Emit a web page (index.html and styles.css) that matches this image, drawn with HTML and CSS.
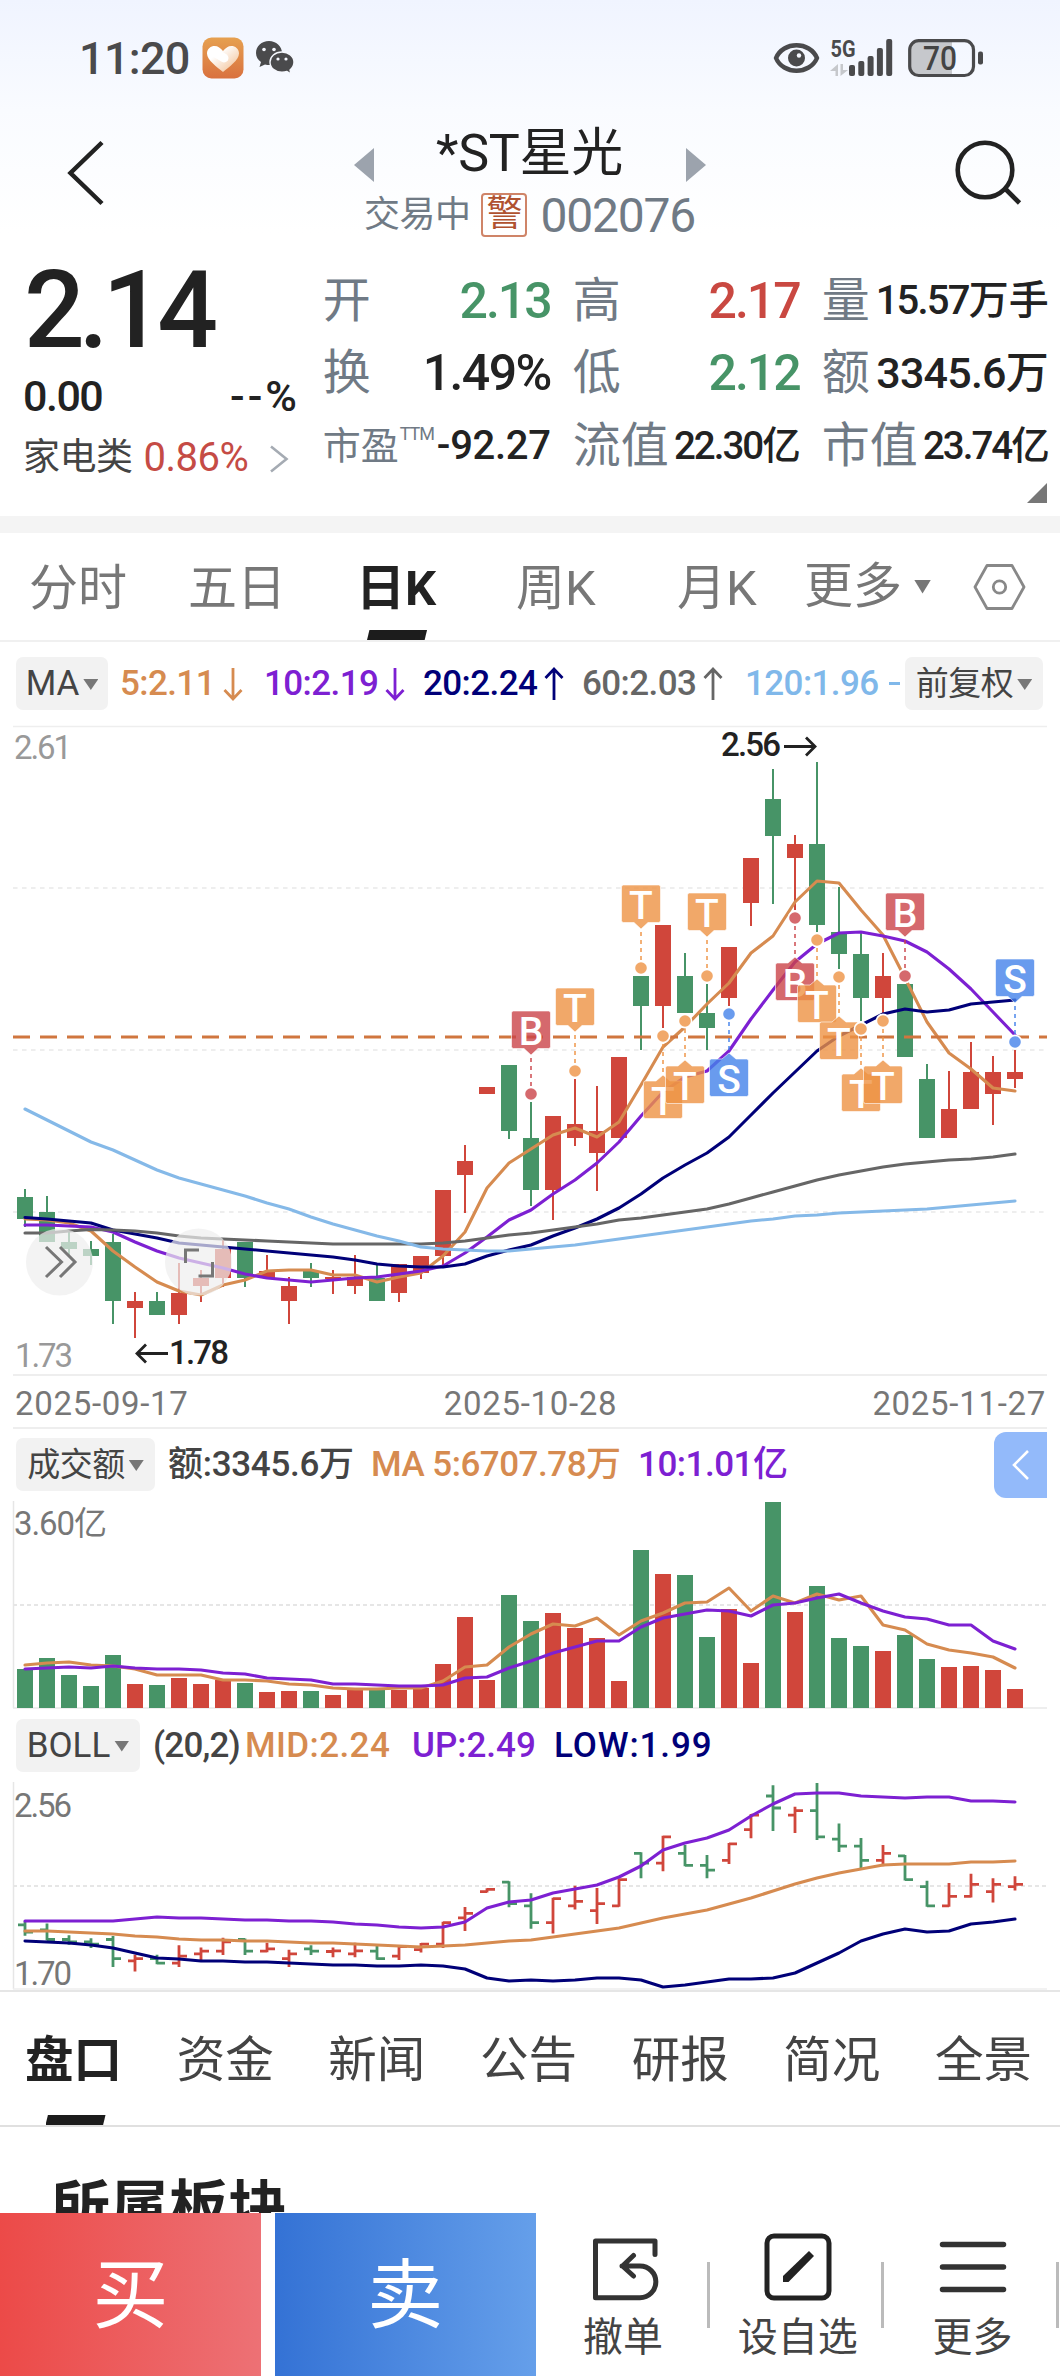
FILE: index.html
```html
<!DOCTYPE html>
<html lang="zh-CN">
<head>
<meta charset="utf-8">
<title>*ST星光 002076</title>
<link rel="stylesheet" href="styles.css">
</head>
<body>
<div class="screen">
  <header class="top">
    <div class="status">
      <span class="clock">11:20</span>
      <svg class="ico-heart" width="42" height="42" viewBox="0 0 42 42">
        <defs>
          <linearGradient id="hb" x1="0" y1="0" x2="0" y2="1"><stop offset="0" stop-color="#e6a050"/><stop offset="1" stop-color="#d9713f"/></linearGradient>
          <linearGradient id="hf" x1="0" y1="0" x2="1" y2="1"><stop offset="0.3" stop-color="#fff"/><stop offset="0.75" stop-color="#f6d3b4"/></linearGradient>
        </defs>
        <rect x="0.5" y="0.5" width="41" height="41" rx="9" fill="url(#hb)"/>
        <path d="M21 35C15 30 5 23 5 16.500C5 11.500 9 9 12.500 9C16 9 18.500 11 21 14C23.500 11 26 9 29.500 9C33 9 37 11.500 37 16.500C37 23 27 30 21 35Z" fill="url(#hf)"/>
        <path d="M12 15L22 21" stroke="#fff" stroke-width="9" stroke-linecap="round"/>
      </svg>
      <svg class="ico-chat" width="40" height="36" viewBox="0 0 40 36">
        <path d="M14 1C6.500 1 1 6 1 13C1 17 3 20 6 22L4.500 27L10 24.500C11.500 25 13 25 15 25C22 24 27 19 27 13C27 6 21 1 14 1Z" fill="#4a4a4c"/>
        <path d="M27 12C20 12 15 16.500 15 22C15 28 20 32.300 27 32.300C29 32.300 30.500 32 32 31.500L36 34L35 30C37.500 28 39 25.500 39 22C39 16.500 33.500 12 27 12Z" fill="#4a4a4c" stroke="#f6f8fe" stroke-width="1.400"/>
        <g fill="#f6f8fe"><circle cx="9" cy="9.500" r="1.800"/><circle cx="19" cy="9.500" r="1.800"/><circle cx="23" cy="19" r="1.600"/><circle cx="31" cy="19" r="1.600"/></g>
      </svg>
      <span class="spring"></span>
      <svg class="ico-eye" width="47" height="32" viewBox="0 0 47 32">
        <path d="M3 16C10 -1 37 -1 44 16C37 33 10 33 3 16Z" fill="none" stroke="#4a4a4c" stroke-width="4.500" stroke-linejoin="round"/>
        <circle cx="23.500" cy="16" r="8.500" fill="#4a4a4c"/><circle cx="26" cy="13.500" r="2.200" fill="#f6f8fe"/>
      </svg>
      <svg class="ico-signal" width="64" height="38" viewBox="0 0 64 38">
        <text x="0.500" y="18" font-size="24" font-weight="700" fill="#4a4a4c" textLength="25" lengthAdjust="spacingAndGlyphs">5G</text>
        <path d="M8 25V37H5.500V32H0L8 25ZM10.500 25V37L18 31H13V25Z" fill="#c6c8cc"/>
        <g fill="#4a4a4c"><rect x="19" y="26" width="6" height="11" rx="2"/><rect x="28.300" y="22" width="6" height="15" rx="2"/><rect x="37.600" y="17" width="6" height="20" rx="2"/><rect x="46.900" y="9" width="6" height="28" rx="2"/><rect x="56.200" y="0" width="6" height="37" rx="2"/></g>
      </svg>
      <svg class="ico-batt" width="77" height="38" viewBox="0 0 77 38">
        <path d="M11 1.500H44V36.500H11C5 36.500 2 33 2 27V11C2 5 5 1.500 11 1.500Z" fill="#c6c8cc"/>
        <rect x="1.700" y="1.700" width="63.800" height="34.800" rx="9" fill="none" stroke="#4a4a4c" stroke-width="3.200"/>
        <rect x="70" y="12.500" width="5" height="13" rx="2" fill="#4a4a4c"/>
        <text x="15" y="31" font-size="34" font-weight="500" fill="#444" textLength="34" lengthAdjust="spacingAndGlyphs">70</text>
      </svg>
    </div>
    <div class="title-bar">
      <svg width="40" height="66" viewBox="0 0 40 66"><path d="M36 2.500L4.500 33L36 63.500" fill="none" stroke="#222" stroke-width="4.500"/></svg>
      <div class="title">
        <div class="title-name">
          <svg width="20" height="34" viewBox="0 0 20 34"><path d="M20 0V34L0 17Z" fill="#9ca3ad"/></svg>
          <h1>*ST星光</h1>
          <svg width="20" height="34" viewBox="0 0 20 34"><path d="M0 0V34L20 17Z" fill="#9ca3ad"/></svg>
        </div>
        <div class="title-sub"><span class="state">交易中</span><span class="warn">警</span><span class="code">002076</span></div>
      </div>
      <svg width="70" height="66" viewBox="0 0 70 66"><circle cx="30" cy="30" r="27.300" fill="none" stroke="#222" stroke-width="4.600"/><path d="M49.500 48L64.500 63" stroke="#222" stroke-width="4.600"/></svg>
    </div>
  </header>

  <section class="quote">
    <div class="price">
      <div class="last">2.14</div>
      <div class="change"><span>0.00</span><span class="dash">--%</span></div>
      <div class="sector"><span>家电类</span><b>0.86%</b><svg width="20" height="28" viewBox="0 0 20 28"><path d="M2 1.500L17.500 14L2 26.500" fill="none" stroke="#a5abb3" stroke-width="2.600"/></svg></div>
    </div>
    <div class="stats">
      <div class="stat"><label>开</label><span class="val down">2.13</span></div>
      <div class="stat"><label>高</label><span class="val up">2.17</span></div>
      <div class="stat"><label>量</label><span class="amount small"><i>15.57</i>万手</span></div>
      <div class="stat"><label>换</label><span class="val pct">1.49%</span></div>
      <div class="stat"><label>低</label><span class="val down">2.12</span></div>
      <div class="stat"><label>额</label><span class="amount large"><i>3345.6</i>万</span></div>
      <div class="stat"><label class="pe">市盈<sup>TTM</sup></label><span class="amount neg">-92.27</span></div>
      <div class="stat"><label>流值</label><span class="amount cap"><i>22.30</i>亿</span></div>
      <div class="stat"><label>市值</label><span class="amount cap"><i>23.74</i>亿</span></div>
    </div>
    <span class="corner"></span>
  </section>

  <nav class="periods">
    <a>分时</a><a>五日</a><a class="on">日K</a><a>周K</a><a>月K</a><a class="more">更多<i class="tri"></i></a>
    <svg width="53" height="46" viewBox="0 0 53 46"><path d="M14 1.500H39L51 23L39 44.500H14L2 23Z" fill="none" stroke="#888" stroke-width="2.800" stroke-linejoin="round"/><circle cx="26.500" cy="23" r="6.200" fill="none" stroke="#888" stroke-width="2.800"/></svg>
  </nav>

  <div class="legend ma-legend">
    <button class="w92">MA<i class="tri"></i></button>
    <span class="c-ma5">5:2.11</span><svg class="arr c-ma5" viewBox="0 0 20 34"><path d="M10 1V31M1.500 23L10 32L18.500 23"/></svg>
    <span class="c-ma10">10:2.19</span><svg class="arr c-ma10" viewBox="0 0 20 34"><path d="M10 1V31M1.500 23L10 32L18.500 23"/></svg>
    <span class="c-ma20">20:2.24</span><svg class="arr c-ma20" viewBox="0 0 20 34"><path d="M10 33V3M1.500 11L10 2L18.500 11"/></svg>
    <span class="c-ma60">60:2.03</span><svg class="arr c-ma60" viewBox="0 0 20 34"><path d="M10 33V3M1.500 11L10 2L18.500 11"/></svg>
    <span class="c-ma120">120:1.96 <em></em></span>
    <button class="w138">前复权<i class="tri"></i></button>
  </div>

  <svg id="kline" class="chart" width="1060" height="656" viewBox="0 720 1060 656"></svg>
  <div class="dates"><span>2025-09-17</span><span>2025-10-28</span><span>2025-11-27</span></div>

  <div class="legend vol-legend">
    <button class="w139">成交额<i class="tri"></i></button>
    <span class="c-dark">额:3345.6万</span><span class="c-ma5">MA 5:6707.78万</span><span class="c-ma10">10:1.01亿</span>
    <div class="drawer"><svg width="18" height="30" viewBox="0 0 18 30"><path d="M16 1L2 15L16 29" fill="none" stroke="#fff" stroke-width="2.600"/></svg></div>
  </div>
  <svg id="volume" class="chart" width="1060" height="209" viewBox="0 1500 1060 209"></svg>

  <div class="legend boll-legend">
    <button class="w124">BOLL<i class="tri"></i></button>
    <span class="c-dark">(20,2)</span><span class="c-ma5">MID:2.24</span><span class="c-ma10">UP:2.49</span><span class="c-ma20">LOW:1.99</span>
  </div>
  <svg id="boll" class="chart" width="1060" height="210" viewBox="0 1780 1060 210"></svg>

  <nav class="sections"><a class="on">盘口</a><a>资金</a><a>新闻</a><a>公告</a><a>研报</a><a>简况</a><a>全景</a></nav>
  <h2 class="board">所属板块</h2>

  <footer class="actions">
    <button class="buy">买</button><button class="sell">卖</button>
    <div class="act"><svg width="70" height="70" viewBox="0 0 70 70"><path d="M67 22.500V9H7.500V65.700H52A15.500 15.500 0 0 0 52 34H34M45.500 23.500L34.500 34L45.500 44" fill="none" stroke="#333" stroke-width="5" stroke-linecap="round" stroke-linejoin="round"/></svg><span>撤单</span></div>
    <div class="act"><svg width="70" height="70" viewBox="0 0 70 70"><rect x="4" y="4" width="62" height="62" rx="7" fill="none" stroke="#222" stroke-width="5"/><path d="M20 50V44L46 19L51 24L25.500 50Z" fill="#222"/></svg><span>设自选</span></div>
    <div class="act"><svg width="70" height="70" viewBox="0 0 70 70"><path d="M4.500 12.500H65.500M4.500 35H65.500M4.500 57.500H65.500" stroke="#333" stroke-width="5.500" stroke-linecap="round"/></svg><span>更多</span></div>
  </footer>
</div>
<script src="charts.js"></script>
</body>
</html>
```
FILE: styles.css
```css
* { box-sizing: border-box; }
body { margin: 0; background: #fff; color: #222; font-family: Roboto, "Noto Sans CJK SC", sans-serif; }
button { border: 0; font-family: inherit; padding: 0; }
i, em { font-style: normal; }
.screen { width: 1060px; height: 2376px; overflow: hidden; display: flex; flex-direction: column; }
.screen > * { flex: none; }
svg { display: block; flex: none; overflow: visible; }

.top { height: 245px; background: linear-gradient(#f0f4ff, #f9fbff 45%, #fff 95%); }
.status { height: 115px; padding: 0 75px 0 79px; display: flex; align-items: center; color: #4a4a4c; }
.clock { font-size: 45px; font-weight: 500; width: 123px; letter-spacing: -0.7px; padding-top: 2px; }
.ico-heart { margin-right: 11px; }
.spring { flex: 1; }
.ico-eye { margin-right: 10px; }
.ico-signal { margin-right: 14px; }
.title-bar { height: 130px; padding: 0 35px 0 66px; display: flex; justify-content: space-between; }
.title-bar > svg { margin-top: 25px; }
.title { width: 352px; margin-left: -2px; display: flex; flex-direction: column; align-items: center; }
.title-name { display: flex; justify-content: space-between; width: 352px; }
.title-name svg { margin-top: 33px; }
h1 { margin: 7px 0 0; font-size: 52px; line-height: 64px; font-weight: 400; letter-spacing: -0.3px; }
.title-sub { height: 50px; margin-top: 4px; display: flex; align-items: center; color: #707a85; }
.state { font-size: 36px; letter-spacing: -0.5px; line-height: 50px; }
.warn { width: 46px; height: 44px; margin: 0 13px 0 11px; border: 2px solid #cf8468; border-radius: 4px; color: #b0522f; font-size: 36px; line-height: 38px; text-align: center; }
.code { font-size: 48px; letter-spacing: -1.2px; line-height: 50px; padding-top: 2px; }

.quote { height: 271px; padding: 20px 10px 0 23px; display: flex; position: relative; }
.price { width: 300px; }
.last { font-size: 107px; font-weight: 500; line-height: 92px; letter-spacing: -6px; margin-left: 1px; }
.change { height: 62px; margin-top: 8px; width: 274px; display: flex; justify-content: space-between; align-items: center; font-size: 43px; font-weight: 500; letter-spacing: -1.5px; }
.change .dash { letter-spacing: 3px; margin-right: -3px; }
.sector { height: 62px; display: flex; align-items: center; font-size: 37px; color: #444; letter-spacing: -0.5px; line-height: 50px; }
.sector b { margin-left: 11px; font-weight: 400; font-size: 40px; color: #c54b45; }
.sector svg { margin-left: 21px; margin-top: 2px; }
.stats { width: 728px; display: grid; grid-template-columns: 228px 227px 227px; column-gap: 22px; grid-template-rows: 72px 72px 74px; }
.stat { display: flex; justify-content: space-between; align-items: center; line-height: 60px; white-space: nowrap; }
.stat label { font-size: 48px; color: #707a85; margin-right: -10px; }
.val { font-size: 50px; font-weight: 500; letter-spacing: -2px; }
.val.pct { letter-spacing: -1.6px; }
.down { color: #479467; }
.up { color: #c94841; }
.amount { font-weight: 500; }
.amount.small { font-size: 40px; }
.small i { letter-spacing: -1.8px; }
.amount.large { font-size: 43px; }
.large i { letter-spacing: -0.8px; }
.amount.neg { font-size: 40px; letter-spacing: -0.3px; }
.amount.cap { font-size: 38.500px; margin-right: -1px; }
.cap i { letter-spacing: -2px; }
.stat .pe { font-size: 38px; display: flex; }
.pe sup { font-size: 18px; line-height: 36px; letter-spacing: -1px; margin-left: 1px; }
.corner { position: absolute; right: 13px; bottom: 13px; width: 20px; height: 20px; background: #777; clip-path: polygon(100% 0, 100% 100%, 0 100%); }

.periods { height: 126px; border-top: 17px solid #f4f4f4; border-bottom: 2px solid #f0f0f0; padding: 0 33px 0 29px; display: flex; align-items: center; font-size: 49px; color: #777; line-height: 111px; }
.periods a { height: 107px; margin-right: 61px; position: relative; white-space: nowrap; }
.periods a:nth-child(2) { margin-right: 70px; }
.periods .on { color: #222; font-weight: 700; width: 80px; margin-right: 80px; }
.periods a:nth-child(4) { width: 81px; margin-right: 80px; }
.periods a:nth-child(5) { width: 81px; margin-right: 46px; }
.periods .more { display: flex; align-items: center; margin-right: 42px; }
.on::after { content: ""; position: absolute; left: 50%; margin-left: -29px; bottom: 0; width: 60px; height: 10px; background: #1c1c1c; clip-path: polygon(4% 0, 100% 0, 96% 100%, 0 100%); }
.tri { display: inline-block; flex: none; width: 15px; height: 11px; background: #777; clip-path: polygon(0 0, 100% 0, 50% 100%); }
.more .tri { width: 17px; height: 14px; margin-left: 12px; }

.legend { display: flex; align-items: center; padding-left: 16px; font-size: 35px; font-weight: 500; line-height: 55px; white-space: nowrap; }
.legend button { height: 53px; border-radius: 7px; background: #f2f2f2; color: #444; font-size: 35px; display: flex; align-items: center; justify-content: center; gap: 4px; line-height: 55px; font-weight: 400; }
.legend button .tri { margin-top: 2px; }
.w92 { width: 92px; } .w138 { width: 138px; } .w139 { width: 139px; } .w124 { width: 124px; }
.legend .w138, .legend .w139 { font-size: 33px; letter-spacing: -0.5px; line-height: 53px; }
.c-ma5 { color: #d68b50; } .c-ma10 { color: #7d20d2; } .c-ma20 { color: #000078; } .c-ma60 { color: #666; } .c-ma120 { color: #80b8ea; } .c-dark { color: #444; }
.ma-legend { height: 78px; padding-top: 5px; letter-spacing: -0.6px; }
.ma-legend .c-ma5:nth-child(2) { margin-left: 12px; width: 92px; }
.ma-legend span { width: 113px; }
.arr { width: 20px; height: 34px; margin: 0 18px 0 8px; fill: none; stroke: currentColor; stroke-width: 2.800; }
.ma-legend .arr.c-ma5 { margin-left: 11px; margin-right: 21px; }
.ma-legend .arr.c-ma60 { margin-right: 22px; }
.ma-legend .c-ma120 { width: 160px; display: flex; align-items: center; }
.c-ma120 em { width: 11px; height: 3px; background: #80b8ea; margin-left: 10px; }
.dates { height: 53px; margin: 0 13px; padding: 0 1px 0 2px; border-bottom: 2px solid #eee; display: flex; justify-content: space-between; font-size: 33px; letter-spacing: 0.700px; color: #777; line-height: 55px; }
.vol-legend { height: 71px; padding-right: 13px; }
.vol-legend span { letter-spacing: -0.5px; }
.vol-legend .c-dark { margin-left: 13px; width: 203px; letter-spacing: -0.300px; }
.vol-legend .c-ma5 { width: 267px; }
.drawer { margin-left: auto; width: 53px; height: 66px; border-radius: 12px 0 0 12px; background: #93bafa; padding: 18px 0 0 18px; }
.boll-legend { height: 71px; padding-top: 1px; }
.boll-legend .c-dark { margin-left: 13px; width: 92px; letter-spacing: -0.8px; }
.boll-legend .c-ma5 { width: 167px; letter-spacing: 0.4px; }
.boll-legend .c-ma10 { width: 142px; }
.boll-legend .c-ma20 { letter-spacing: 0.9px; }
.chart text { font-family: Roboto, "Noto Sans CJK SC", sans-serif; }

.sections { height: 137px; border-top: 2px solid #e6e6e6; border-bottom: 2px solid #e0e0e0; padding: 0 28px 0 25px; display: flex; justify-content: space-between; font-size: 48.500px; color: #444; line-height: 137px; }
.sections a { position: relative; height: 133px; }
.sections .on { color: #222; font-weight: 700; }
.sections .on::after { margin-left: -28px; }
.board { margin: 0; height: 86px; padding: 52px 0 0 51px; font-size: 59px; line-height: 60px; font-weight: 700; overflow: hidden; }
.actions { height: 163px; display: flex; background: #fff; position: relative; }
.actions button { width: 261px; color: #fff; font-size: 76px; line-height: 167px; }
.buy { background: linear-gradient(90deg, #ec4a48, #ed7175); margin-right: 14px; }
.sell { background: linear-gradient(90deg, #3472d5, #659fea); }
.act { width: 175px; padding-top: 19px; display: flex; flex-direction: column; align-items: center; font-size: 40px; line-height: 50px; color: #444; background: linear-gradient(#bbb, #bbb) 171px 49px / 3px 66px no-repeat; }
.act span { margin-top: 11px; }
```
FILE: charts.js
```js
const RED = '#d0463b', GREEN = '#479467', ORANGE = '#d68b50', PURPLE = '#7d20d2', NAVY = '#000078';
const x = i => 25 + 22 * i;

// One row per session: direction, high, body top, body bottom, low.
const candles = `g1189,1197,1219,1227 g1196,1212,1242,1242 g1232,1242,1249,1255 g1241,1249,1256,1265 g1234,1242,1301,1324
r1292,1301,1308,1338 g1292,1301,1315,1315 r1263,1293,1315,1324 r1270,1278,1286,1302 r1240,1249,1278,1287 g1242,1242,1278,1287
r1255,1271,1278,1278 r1277,1286,1301,1324 g1263,1271,1278,1287 r1270,1277,1279,1294 r1255,1277,1286,1294 g1264,1278,1301,1301
r1264,1264,1293,1302 r1256,1256,1273,1279 r1190,1190,1256,1265 r1145,1161,1175,1213 r1087,1087,1094,1094 g1065,1065,1131,1139
g1102,1138,1190,1206 r1116,1116,1190,1220 r1079,1124,1138,1146 r1086,1131,1153,1191 r1057,1057,1138,1138 g976,976,1006,1050
r925,925,1006,1028 g953,976,1013,1013 g984,1013,1028,1050 r947,947,998,1006 r858,858,903,926 g769,799,836,904 r835,844,858,910
g762,844,925,932 g887,932,954,969 g932,954,998,1021 r953,976,998,1013 g984,984,1057,1057 g1064,1079,1138,1138 r1071,1109,1138,1138
r1042,1072,1109,1109 r1056,1072,1094,1125 r1050,1072,1079,1088`.split(/\s+/).map(s => [s[0] === 'r' ? RED : GREEN, ...s.slice(1).split(',').map(Number)]);

const ma5 = [1219,1220,1223,1231,1251,1267,1282,1291,1295,1285,1280,1271,1270,1270,1275,1275,1282,1277,1273,1256,1232,1188,1163,1149,1135,1128,1137,1122,1085,1047,1027,1004,983,953,936,902,881,883,910,935,978,1022,1053,1069,1088,1091];
const ma10 = [1225,1225,1226,1227,1232,1242,1251,1258,1263,1268,1274,1278,1280,1282,1280,1278,1277,1274,1271,1266,1253,1237,1220,1210,1194,1180,1163,1142,1116,1092,1077,1071,1051,1019,990,962,944,933,932,936,941,952,969,989,1012,1035];
const ma20 = [1217.5,1219,1221,1223,1230,1234,1238,1243,1245,1247,1249,1251,1253,1255,1257,1260,1264,1266,1267,1267,1264,1256,1250,1245,1236,1228,1219,1208,1194,1178,1165,1153,1137,1115,1093,1072,1051,1036,1025,1014,1009,1012,1010,1004,1002,1000];
const ma60 = [1233,1233,1231,1229.5,1230,1231,1233,1236,1238,1239,1240,1241,1242,1243,1244,1244,1244,1244,1244,1243,1241,1238,1235,1233,1230,1227,1224,1220,1218,1215,1212,1209,1204,1198,1192,1186,1180,1175,1171,1167,1164,1162,1160,1159,1157,1154];
const ma120 = [1109,1120,1131,1142,1150,1160,1170,1178,1184,1190,1196,1203,1209,1217,1224,1230,1236,1241,1247,1249,1250,1251,1251,1249,1247,1245,1242,1239,1236,1233,1230,1227,1224,1221,1219,1216,1215,1213,1212,1211,1210,1209,1207,1205,1203,1201];

// Trade markers: session, letter, top of the tag, centre of the dot.
const marks = [[23,'B',1011,1094],[25,'T',988,1071],[28,'T',885,968],[31,'T',893,976],[29,'T',1081,1036],[30,'T',1066,1021],[32,'S',1059,1014],
[35,'B',963,918],[36,'T',985,940],[37,'T',1022,977],[38,'T',1074,1029],[39,'T',1066,1021],[40,'B',893,976],[45,'S',959,1042]];

const volume = [1669,1658,1675,1686,1655,1684,1685,1678,1684,1680,1683,1692,1691,1691,1695,1690,1690,1690,1688,1664,1617,1680,1595,1621,1613,1628,1638,1681,1550,1574,1575,1637,1609,1663,1502,1612,1586,1638,1646,1651,1635,1659,1667,1666,1670,1689];
const vol5 = [1665,1663,1662,1665,1666,1669,1675,1675,1675,1680,1680,1681,1684,1685,1688,1689,1689,1688,1688,1681,1667,1665,1647,1634,1624,1626,1618,1635,1621,1613,1603,1602,1588,1611,1596,1603,1594,1600,1596,1625,1630,1644,1650,1653,1657,1668];
const vol10 = [1669,1668,1667,1668,1666,1668,1669,1669,1670,1673,1674,1678,1679,1680,1684,1684,1685,1686,1686,1685,1678,1677,1668,1661,1653,1647,1641,1641,1627,1618,1614,1610,1611,1616,1605,1603,1598,1594,1603,1611,1617,1619,1625,1625,1641,1649];

const up = [1921,1921,1921,1921,1921,1919,1917,1918,1918,1919,1920,1920,1921,1921,1922,1924,1925,1927,1928,1927,1922,1908,1902,1900,1893,1889,1885,1877,1866,1850,1843,1838,1830,1816,1804,1794,1793,1793,1796,1797,1798,1797,1797,1801,1801,1802];
const mid = [1931,1931,1932,1933,1934,1936,1937,1939,1940,1940,1941,1941,1942,1943,1943,1944,1945,1946,1947,1946,1945,1943,1941,1940,1937,1934,1931,1928,1923,1918,1914,1910,1904,1898,1891,1884,1878,1873,1869,1865,1864,1864,1864,1862,1862,1861];
const low = [1941,1942,1943,1945,1948,1953,1958,1959,1961,1961,1962,1962,1963,1964,1965,1965,1966,1966,1965,1966,1969,1978,1981,1980,1981,1980,1978,1978,1980,1987,1985,1982,1979,1979,1978,1973,1963,1953,1941,1934,1929,1932,1931,1924,1922,1919];

const line = (ys, c, w = 3.1) => `<polyline points="${ys.map((y, i) => x(i) + ',' + y).join(' ')}" fill="none" stroke="${c}" stroke-width="${w}" stroke-linejoin="round" stroke-linecap="round"/>`;
const rule = (y, dash, c = '#eee', w = 2) => `<path d="M13 ${y}H1047" stroke="${c}" stroke-width="${w}" ${dash ? `stroke-dasharray="${dash}"` : ''}/>`;
const label = (lx, y, s, c, w = 400, len = 58) => `<text x="${lx}" y="${y}" font-size="33" font-weight="${w}" fill="${c}" textLength="${len}">${s}</text>`;

function marker([i, letter, top, dot]) {
  const cx = x(i), above = top < dot, tip = above ? top + 44 : top - 6;
  const color = { B: '#ca4448', T: '#ee9244', S: '#4482ea' }[letter];
  const l = cx - 19.5, r = cx + 19.5, b = top + 37.5;
  const body = above
    ? `M${l + 2} ${top}H${r - 2}Q${r} ${top} ${r} ${top + 2}V${b - 2}Q${r} ${b} ${r - 2} ${b}H${cx + 7}L${cx} ${tip}L${cx - 7} ${b}H${l + 2}Q${l} ${b} ${l} ${b - 2}V${top + 2}Q${l} ${top} ${l + 2} ${top}Z`
    : `M${l + 2} ${top}H${cx - 7}L${cx} ${tip}L${cx + 7} ${top}H${r - 2}Q${r} ${top} ${r} ${top + 2}V${b - 2}Q${r} ${b} ${r - 2} ${b}H${l + 2}Q${l} ${b} ${l} ${b - 2}V${top + 2}Q${l} ${top} ${l + 2} ${top}Z`;
  return `<path d="M${cx} ${dot}V${tip}" stroke="${color}" stroke-opacity=".8" stroke-width="1.8" stroke-dasharray="4 4"/>
    <circle cx="${cx}" cy="${dot}" r="6.400" fill="#fff" stroke="#fff" stroke-width="2"/><circle cx="${cx}" cy="${dot}" r="5.800" fill="${color}" fill-opacity=".8"/>
    <path d="${body}" fill="${color}" fill-opacity=".8" stroke="#fff" stroke-opacity=".6"/>
    <text x="${cx}" y="${top + 33.5}" text-anchor="middle" font-size="39" font-weight="500" fill="#fff">${letter}</text>`;
}

document.getElementById('kline').innerHTML =
  rule(726.5, '', '#eee', 1.4) + rule(888, '4.500 4.500') + rule(1050, '4.500 4.500') + rule(1212, '4.500 4.500') + rule(1375, '') +
  label(14, 759, '2.61', '#999') + label(15, 1367, '1.73', '#999') +
  candles.map(([c, h, t, b, l], i) => `<path d="M${x(i)} ${h}V${l}" stroke="${c}" stroke-width="2"/><rect x="${x(i) - 8}" y="${t}" width="16" height="${b - t}" fill="${c}"/>`).join('') +
  line(ma5, ORANGE) + line(ma10, PURPLE) + line(ma20, NAVY) + line(ma60, '#666') + line(ma120, '#85b9e8') +
  `<path d="M13 1037H1047" stroke="#d0763f" stroke-width="3" stroke-dasharray="17 10"/>` +
  marks.map(marker).join('') +
  label(721, 756, '2.56', '#222', 500, 60) + `<path d="M784 746.500H815M806 737.500L815 746.500L806 755.500" fill="none" stroke="#222" stroke-width="2.800"/>` +
  label(169, 1363.5, '1.78', '#222', 500, 60) + `<path d="M168 1353.500H137M146 1344.500L137 1353.500L146 1362.500" fill="none" stroke="#222" stroke-width="2.800"/>` +
  `<g fill="#eee" fill-opacity=".7"><circle cx="59.500" cy="1262" r="33.500"/><circle cx="198.500" cy="1262" r="33.500"/></g>
   <path d="M46 1247L61.500 1262L46 1277M60 1247L75 1262L60 1277M185.500 1263V1250H199M212.500 1262V1276H198.500" fill="none" stroke="#777" stroke-width="3"/>`;

document.getElementById('volume').innerHTML =
  `<path d="M13.500 1501V1708" stroke="#e6e6e6" stroke-width="1.500"/>` + rule(1605, '4 3', '#e6e6e6') + rule(1708, '', '#e8e8e8', 1.5) +
  label(14, 1535, '3.60亿', '#777', 400, 93) +
  volume.map((y, i) => `<rect x="${x(i) - 8}" y="${y}" width="16" height="${1708 - y}" fill="${candles[i][0]}"/>`).join('') +
  line(vol5, ORANGE) + line(vol10, PURPLE);

// The price bars reuse the session data on the smaller Bollinger scale.
const s = y => 1784 + (y - 762) * 0.324;
document.getElementById('boll').innerHTML =
  `<path d="M13.500 1782V1989" stroke="#e6e6e6" stroke-width="1.500"/>` + rule(1886, '4 3', '#e6e6e6') + rule(1989, '', '#eee', 1.5) +
  label(14, 1817, '2.56', '#777') + label(14, 1985, '1.70', '#777') +
  candles.map(([c, h, t, b, l], i) => {
    const open = s(c === RED ? b : t), close = s(c === RED ? t : b);
    return `<path d="M${x(i)} ${s(h) - 1}V${s(l) + 1}M${x(i) - 7} ${open}H${x(i)}M${x(i)} ${close}H${x(i) + 8}" stroke="${c}" stroke-width="2.800"/>`;
  }).join('') + line(up, PURPLE) + line(mid, ORANGE) + line(low, NAVY);
```
